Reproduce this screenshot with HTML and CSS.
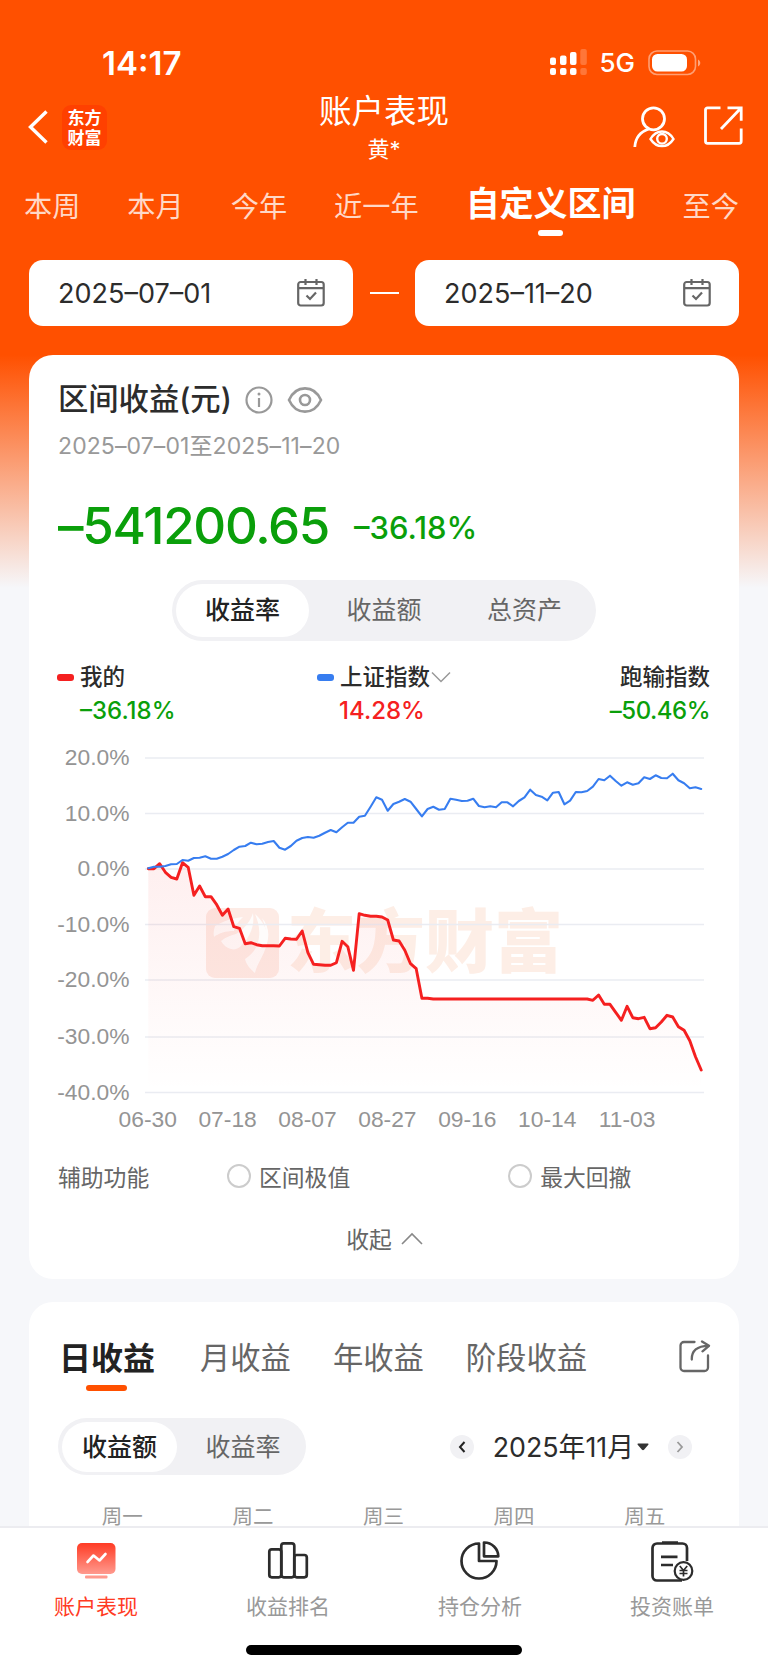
FILE: index.html
```html
<!DOCTYPE html>
<html lang="zh-CN">
<head>
<meta charset="utf-8">
<title>账户表现</title>
<link rel="stylesheet" href="styles.css">
</head>
<body>
<div class="screen">
  <main class="content">
    <div class="status">
      <span class="clock">14:17</span>
      <div class="status-right">
        <svg class="signal" width="38" height="27" viewBox="0 0 38 27" fill="#fff">
          <rect x="1" y="8.500" width="6" height="7.500" rx="2"/><rect x="11" y="6.500" width="6.500" height="9.500" rx="2"/><rect x="21" y="3" width="6.500" height="13" rx="2"/><rect x="31.300" y="0" width="6.500" height="16" rx="2" opacity=".22"/>
          <rect x="1" y="19" width="6" height="7" rx="2"/><rect x="11" y="19" width="6.500" height="7" rx="2"/><rect x="21" y="19" width="6.500" height="7" rx="2"/><rect x="31.300" y="19" width="6.500" height="7" rx="2" opacity=".22"/>
        </svg>
        <span class="net">5G</span>
        <svg class="battery" width="53" height="26" viewBox="0 0 53 26">
          <rect x="1" y="1" width="46.500" height="23.500" rx="8" fill="none" stroke="#fff" stroke-opacity=".45" stroke-width="1.600"/>
          <rect x="4" y="4" width="35" height="17.500" rx="5.500" fill="#fff"/>
          <path d="M50 9.500c3 1.500 3 5.500 0 7z" fill="#fff" opacity=".5"/>
        </svg>
      </div>
    </div>

    <header class="nav">
      <div class="nav-left">
        <svg width="20" height="34" viewBox="0 0 20 34" fill="none" stroke="#fff" stroke-width="3.400"><path d="M18.500 1.500 2.500 17l16 15.500"/></svg>
        <div class="logo">东方<br>财富</div>
      </div>
      <div class="nav-title"><h1>账户表现</h1><p>黄*</p></div>
      <div class="nav-right">
        <svg width="42" height="42" viewBox="0 0 42 42" fill="none" stroke="#fff" stroke-width="2.800">
          <circle cx="20.500" cy="12.800" r="11"/><path d="M1.800 41c.6-9.500 6.300-15.500 14-18"/>
          <path d="M17.500 33c6-10 17-10 23 0-6 9.500-17 9.500-23 0z" stroke-width="2.400"/><circle cx="29" cy="32.800" r="4.800" stroke-width="2.400"/>
        </svg>
        <svg width="39" height="39" viewBox="0 0 39 39" fill="none" stroke="#fff" stroke-width="2.800">
          <path d="M16.500 1.800H3.500a2 2 0 0 0-2 2v31.500a2 2 0 0 0 2 2h31.700a2 2 0 0 0 2-2V22.500M23.500 1.800h13.700v13M36.500 2.500 17 23"/>
        </svg>
      </div>
    </header>

    <nav class="ranges">
      <span>本周</span><span>本月</span><span>今年</span><span>近一年</span><span class="on">自定义区间</span><span>至今</span>
    </nav>

    <div class="dates">
      <div class="date"><span>2025–07–01</span>
        <svg width="28" height="28" viewBox="0 0 28 28" fill="none" stroke="#666" stroke-width="2.200"><rect x="1.200" y="3" width="25.500" height="23.500" rx="2.500"/><path d="M1.200 9.200h25.500M8.500 0v6M19.500 0v6M9.500 16.500l3.500 3.500 6-6.500"/></svg>
      </div>
      <i class="to"></i>
      <div class="date"><span>2025–11–20</span>
        <svg width="28" height="28" viewBox="0 0 28 28" fill="none" stroke="#666" stroke-width="2.200"><rect x="1.200" y="3" width="25.500" height="23.500" rx="2.500"/><path d="M1.200 9.200h25.500M8.500 0v6M19.500 0v6M9.500 16.500l3.500 3.500 6-6.500"/></svg>
      </div>
    </div>

    <section class="card profit">
      <div class="card-head">
        <h2>区间收益(元)</h2>
        <svg width="28" height="28" viewBox="0 0 28 28" fill="none" stroke="#999" stroke-width="2.200"><circle cx="14" cy="14" r="12.500"/><path d="M14 12v9" stroke-width="2.200"/><circle cx="14" cy="8" r="1.500" fill="#999" stroke="none"/></svg>
        <svg width="36" height="28" viewBox="0 0 36 28" fill="none" stroke="#999" stroke-width="2.600"><path d="M2 14C9-1.500 27-1.500 34 14 27 29.500 9 29.500 2 14z"/><circle cx="18" cy="14" r="5"/></svg>
      </div>
      <p class="period">2025–07–01至2025–11–20</p>
      <div class="totals"><strong>–541200.65</strong><span>–36.18%</span></div>

      <div class="segment large"><span class="on">收益率</span><span class="mid">收益额</span><span class="last">总资产</span></div>

      <div class="legend">
        <div class="item mine"><div class="name"><i class="mark red"></i>我的</div><div class="val down">–36.18%</div></div>
        <div class="item index"><div class="name"><i class="mark blue"></i>上证指数<svg width="21" height="12" viewBox="0 0 21 12" fill="none" stroke="#999" stroke-width="1.500"><path d="M2 1.500l9 9 9-9"/></svg></div><div class="val up">14.28%</div></div>
        <div class="item diff"><div class="name">跑输指数</div><div class="val down">–50.46%</div></div>
      </div>

      <svg class="chart" width="710" height="400" viewBox="29 740 710 400">
        <defs><linearGradient id="fade" x1="0" y1="869" x2="0" y2="1092" gradientUnits="userSpaceOnUse"><stop offset="0" stop-color="#f52020" stop-opacity=".07"/><stop offset="1" stop-color="#f52020" stop-opacity="0"/></linearGradient></defs>
        <g class="brand">
          <rect x="206" y="908" width="73" height="70" rx="9" fill="#fdebe5"/>
          <g fill="#fff" opacity=".85">
            <path d="M215 926c8-5 18-8 28-9-5 5-8 9-9 14-8 0-15 2-20 6-1-4 0-8 1-11z"/>
            <path d="M253 913c2 13-3 24-12 33-3 3-7 4-10 3-4-1-8-4-10-8 5-4 10-6 15-7 8-5 14-12 17-21z"/>
            <path d="M255 914c11 10 15 22 11 33-3 10-9 17-11 26-5-4-9-9-10-14 8-5 13-12 14-22 1-8-1-16-4-23z"/>
            <path d="M262 918c7 8 8 18 4 28 1-10 0-19-4-28z"/>
          </g>
          <text x="287" y="967">东方财富</text>
        </g>
        <g class="grid" id="grid"></g>
        <path id="area" fill="url(#fade)"/>
        <path id="mine" class="line mine-line"/>
        <path id="index" class="line index-line"/>
        <g class="ylab" id="ylab"></g>
        <g class="xlab" id="xlab"></g>
      </svg>

      <div class="aids">
        <span class="aid-title">辅助功能</span>
        <span class="radio"><i></i>区间极值</span>
        <span class="radio second"><i></i>最大回撤</span>
      </div>
      <div class="fold">收起<svg width="22" height="13" viewBox="0 0 22 13" fill="none" stroke="#888" stroke-width="1.600"><path d="M1 12 11 2l10 10"/></svg></div>
    </section>

    <section class="card daily">
      <div class="tabs">
        <span class="on">日收益</span><span>月收益</span><span>年收益</span><span>阶段收益</span>
        <svg width="32" height="33" viewBox="0 0 32 33" fill="none" stroke="#666" stroke-width="2.300" stroke-linejoin="round" stroke-linecap="round"><path d="M15.500 2H5a3.500 3.500 0 0 0-3.500 3.500v22A3.500 3.500 0 0 0 5 31h20.500a3.500 3.500 0 0 0 3.500-3.500V15.500M12.800 19.500C12.500 11 18 5.800 29.500 5.800M23 1.500l7 4.300-6.500 5.500"/></svg>
      </div>
      <div class="controls">
        <div class="segment small"><span class="on">收益额</span><span>收益率</span></div>
        <div class="month">
          <i class="round"><svg width="8" height="12" viewBox="0 0 8 12" fill="none" stroke="#222" stroke-width="2"><path d="M6.500 1 2 6l4.500 5"/></svg></i>
          <span>2025年11月</span>
          <svg class="caret" width="12" height="8" viewBox="0 0 12 8"><path d="M1 .5h10q1 .5.300 1.300L7 6.800q-1 .9-2 0L.7 1.800Q0 1 1 .5z" fill="#333"/></svg>
          <i class="round"><svg width="8" height="12" viewBox="0 0 8 12" fill="none" stroke="#999" stroke-width="1.800"><path d="M1.500 1 6 6l-4.500 5"/></svg></i>
        </div>
      </div>
      <div class="week"><span>周一</span><span>周二</span><span>周三</span><span>周四</span><span>周五</span></div>
    </section>
  </main>

  <footer class="tabbar">
    <div class="entries">
      <div class="entry on">
        <svg width="44" height="42" viewBox="0 0 44 42"><defs><linearGradient id="hot" x1="0" y1="0" x2="0" y2="1"><stop offset="0" stop-color="#ff3b24"/><stop offset="1" stop-color="#ff9a8e"/></linearGradient></defs><rect x="3" y="2" width="38.500" height="31" rx="5" fill="url(#hot)"/><rect x="11" y="34.500" width="22.500" height="3" rx="1" fill="#ff9a8e"/><path d="M13.500 21l6-6.500 6 5 6-6.500" fill="none" stroke="#fff" stroke-width="2.600" stroke-linecap="round" stroke-linejoin="round"/></svg>
        账户表现
      </div>
      <div class="entry">
        <svg width="44" height="42" viewBox="0 0 44 42" fill="none" stroke="#2c2c2c" stroke-width="2.700"><rect x="3.300" y="8.300" width="12" height="28" rx="2.500"/><rect x="15.300" y="2.300" width="13" height="34" rx="2.500"/><rect x="28.300" y="14" width="12.500" height="22.300" rx="2.500"/></svg>
        收益排名
      </div>
      <div class="entry">
        <svg width="44" height="42" viewBox="0 0 44 42" fill="none" stroke="#2c2c2c" stroke-width="2.700" stroke-linejoin="round"><path d="M21 2.500A17.500 17.500 0 1 0 38.500 20H21zM26 1.500V15.300H40.300A14 14 0 0 0 26 1.500z"/></svg>
        持仓分析
      </div>
      <div class="entry">
        <svg width="44" height="42" viewBox="0 0 44 42" fill="none" stroke="#2c2c2c" stroke-width="2.700"><path d="M37 20V7a4.500 4.500 0 0 0-4.500-4.500H7A4.500 4.500 0 0 0 2.500 7v28A4.500 4.500 0 0 0 7 39.500h25"/><path d="M12 1.500h16M11 15.800h16.500M11 24h12"/><circle cx="33.500" cy="30" r="8.800" fill="#fff" stroke-width="2.200"/><path d="M29.800 25l3.700 4.500 3.700-4.500M33.500 29.500v6M29.500 29.500h8M29.500 32.500h8" stroke-width="1.700"/></svg>
        投资账单
      </div>
    </div>
    <div class="home"></div>
  </footer>
</div>
<script src="chart.js"></script>
</body>
</html>
```
FILE: styles.css
```css
* { box-sizing: border-box; margin: 0; padding: 0; }
body { font-family: Inter, "Noto Sans CJK SC", sans-serif; color: #2c2c2c; }
svg { display: block; flex: none; }
i { font-style: normal; }
span { white-space: nowrap; }

.screen { width: 768px; height: 1670px; display: flex; flex-direction: column; overflow: hidden;
  background: linear-gradient(180deg, #ff5000 0, #ff5000 355px, #f6f7fa 588px); }
.content { flex: 1; min-height: 0; overflow: hidden; }

.status { height: 85px; padding: 39px 67px 0 102px; display: flex; justify-content: space-between; align-items: center; color: #fff; }
.clock { font-size: 33px; font-weight: 600; padding-top: 1px; }
.status-right { display: flex; align-items: center; padding-top: 1px; }
.net { font-size: 26px; font-weight: 500; margin: 0 13px 0 12px; }

.nav { height: 89px; padding: 1px 25px 0 28px; display: grid; grid-template-columns: 1fr 200px 1fr; color: #fff; }
.nav-left { display: flex; gap: 14px; padding-top: 18px; height: 64px; align-items: center; }
.logo { width: 45px; height: 45px; border-radius: 9px; background: #ff4000; text-align: center; padding-top: 2px; font: 700 17px/20px "Noto Sans CJK SC", sans-serif; }
.nav-title { text-align: center; margin: 1px 0 0 -3px; }
.nav-title h1 { font-size: 32.500px; font-weight: 400; line-height: 48px; padding-top: 1px; height: 48px; }
.nav-title p { font-size: 22px; line-height: 28px; }
.nav-right { display: flex; justify-content: flex-end; align-items: flex-start; gap: 29px; padding-top: 20px; }

.ranges { height: 86px; padding: 0 29px 0 24px; display: flex; justify-content: space-between; font-size: 28.200px; line-height: 67px; color: rgba(255,255,255,.78); }
.ranges .on { font-size: 34px; font-weight: 700; color: #fff; line-height: 59px; position: relative; }
.ranges .on::after { content: ""; position: absolute; left: 72px; top: 56px; width: 25px; height: 6px; border-radius: 3px; background: #fff; }

.dates { padding: 0 29px; display: flex; align-items: center; justify-content: space-between; }
.date { width: 324px; height: 66px; border-radius: 14px; background: #fff; padding: 0 28px 0 29px; display: flex; align-items: center; justify-content: space-between; font-size: 27px; }
.to { width: 29px; height: 2px; background: #fff; }

.card { margin: 0 29px; background: #fff; border-radius: 24px; }
.profit { margin-top: 29px; height: 924px; padding-top: 22px; overflow: hidden; }
.card-head { height: 46px; padding-left: 29px; display: flex; align-items: center; }
.card-head h2 { font-size: 30.300px; font-weight: 500; width: 187px; white-space: nowrap; line-height: 44px; padding-bottom: 2px; }
.card-head svg + svg { margin-left: 14px; }
.period { padding-left: 29px; font-size: 23px; letter-spacing: .1px; line-height: 46px; color: #999; }
.totals { padding-left: 29px; height: 78px; margin-top: 18px; display: flex; align-items: center; color: #0a9f0a; line-height: 78px; }
.totals strong { font-size: 51px; font-weight: 500; width: 296px; letter-spacing: -1.300px; }
.totals span { font-size: 31px; font-weight: 500; padding-top: 3px; }

.segment { display: flex; background: #f1f1f4; border-radius: 31px; font-size: 25px; color: #666; align-items: center; }
.segment span { text-align: center; flex: none; }
.segment .on { background: #fff; color: #222; font-weight: 500; border-radius: 28px; }
.large { width: 424px; height: 61px; margin: 15px auto 0; padding: 4px; line-height: 53px; }
.large .on { width: 133px; }
.large .mid { width: 150px; }
.large .last { width: 131px; }

.legend { height: 86px; margin-top: 19px; padding: 0 29px; display: flex; font-size: 22.500px; font-weight: 500; }
.name { line-height: 34px; display: flex; align-items: center; white-space: nowrap; }
.val { line-height: 34px; font-size: 24px; }
.mine { width: 260px; }
.mine .val { padding-left: 22px; }
.index .val { padding-left: 21px; }
.diff { margin-left: auto; text-align: right; }
.diff .name { justify-content: flex-end; }
.diff .val { letter-spacing: -.5px; }
.mark { width: 17px; height: 7px; border-radius: 3px; margin: 0 6px 0 -1px; }
.red { background: #f52020; }
.blue { background: #377df0; }
.down { color: #0a9f0a; }
.up { color: #f52020; }

.chart { margin-top: -6px; }
.grid line { stroke: #eaecf2; stroke-width: 1.300; }
.line { fill: none; stroke-linejoin: round; stroke-linecap: round; }
.mine-line { stroke: #f52020; stroke-width: 2.900; }
.index-line { stroke: #377df0; stroke-width: 2.100; }
.brand text { font: 900 69px "Noto Sans CJK SC", sans-serif; fill: #fdeee6; }
.ylab, .xlab { font: 22.800px "Liberation Sans", Arial, sans-serif; fill: #949494; }
.ylab { text-anchor: end; }
.xlab { text-anchor: middle; }

.aids { height: 34px; margin-top: 19px; padding-left: 29px; display: flex; align-items: center; font-size: 22.800px; color: #666; }
.aid-title { width: 169px; }
.radio { display: flex; align-items: center; }
.radio i { width: 24px; height: 24px; border: 2px solid #ccc; border-radius: 50%; margin-right: 8px; }
.radio.second { margin-left: 158px; }
.fold { height: 34px; margin-top: 28px; padding-left: 1px; display: flex; align-items: center; justify-content: center; gap: 9px; font-size: 22.800px; color: #666; }

.daily { margin-top: 23px; height: 400px; padding-top: 22px; }
.tabs { height: 64px; padding: 0 28px 0 30px; display: flex; align-items: center; font-size: 30.300px; color: #666; }
.tabs span { margin-right: 42px; }
.tabs .on { font-size: 32px; font-weight: 700; color: #222; margin-right: 45px; position: relative; }
.tabs .on::after { content: ""; position: absolute; left: 27px; bottom: -12px; width: 41px; height: 6px; border-radius: 3px; background: #ff5000; }
.tabs svg { margin-left: auto; }
.controls { padding: 30px 47px 0 29px; display: flex; justify-content: space-between; align-items: center; }
.small { width: 248px; height: 57px; padding: 4px; line-height: 50px; }
.small .on { width: 115px; }
.small .on + span { width: 132px; }
.month { display: flex; align-items: center; font-size: 26.800px; }
.round { width: 24px; height: 24px; border-radius: 50%; background: #f1f1f4; display: flex; align-items: center; justify-content: center; }
.month span { margin: 0 3px 0 19px; padding-bottom: 2px; }
.caret { margin-right: 19px; }
.week { margin-top: 27px; padding: 0 28px; display: flex; font-size: 20.500px; line-height: 30px; color: #999; }
.week span { width: 130.600px; flex: none; text-align: center; }

.tabbar { height: 144px; background: #fff; border-top: 2px solid #ececf0; }
.entries { display: grid; grid-template-columns: repeat(4, 1fr); }
.entry { display: flex; flex-direction: column; align-items: center; padding-top: 13px; font-size: 21px; line-height: 30px; color: #999; }
.entry svg { margin-bottom: 9px; }
.entry.on { color: #ff3b24; }
.home { width: 276px; height: 10px; margin: 23px auto 0; border-radius: 5px; background: #000; }
```
FILE: chart.js
```js
// Daily samples from the trading days 06-30 to 11-20, in thirds of a pixel below the chart top.
const index = [385,380,380,378,373,372,360,362,354,353,349,356,356,350,342,330,320,318,308,313,311,306,303,323,329,318,302,294,291,293,287,278,270,277,262,248,248,230,227,200,172,179,212,192,185,177,185,207,229,207,200,209,207,176,179,183,182,176,198,202,199,202,187,187,199,183,172,149,165,170,181,158,156,193,182,156,157,153,140,117,121,107,123,137,127,134,130,112,117,106,114,115,101,121,130,145,142,147];
const mine = [386,386,371,397,412,417,368,382,466,438,470,470,494,526,507,560,565,611,608,614,617,617,617,618,595,597,598,573,638,673,674,676,676,668,604,620,691,521,526,529,529,531,540,600,603,631,671,686,775,775]
  .concat(Array(28).fill(777), [781,765,793,793,817,841,799,833,836,832,866,863,846,826,831,860,871,902,950,990]);

const LEFT = 148.3, TOP = 740, STEP = 5.7;
const trace = data => 'M' + data.map((v, i) => `${(LEFT + i * STEP).toFixed(1)} ${(TOP + v / 3).toFixed(1)}`).join('L');
document.getElementById('index').setAttribute('d', trace(index));
document.getElementById('mine').setAttribute('d', trace(mine));
document.getElementById('area').setAttribute('d', `${trace(mine)}V1092H${LEFT}Z`);

const rows = [['20.0%', 758], ['10.0%', 813.5], ['0.0%', 869], ['-10.0%', 924.5], ['-20.0%', 980], ['-30.0%', 1037], ['-40.0%', 1092.5]];
document.getElementById('grid').innerHTML = rows.map(r => `<line x1="145" x2="704" y1="${r[1]}" y2="${r[1]}"/>`).join('');
document.getElementById('ylab').innerHTML = rows.map(r => `<text x="129.500" y="${r[1] + 7}">${r[0]}</text>`).join('');
document.getElementById('xlab').innerHTML = ['06-30', '07-18', '08-07', '08-27', '09-16', '10-14', '11-03']
  .map((d, i) => `<text x="${147.7 + i * 79.9}" y="1126.500">${d}</text>`).join('');
```
